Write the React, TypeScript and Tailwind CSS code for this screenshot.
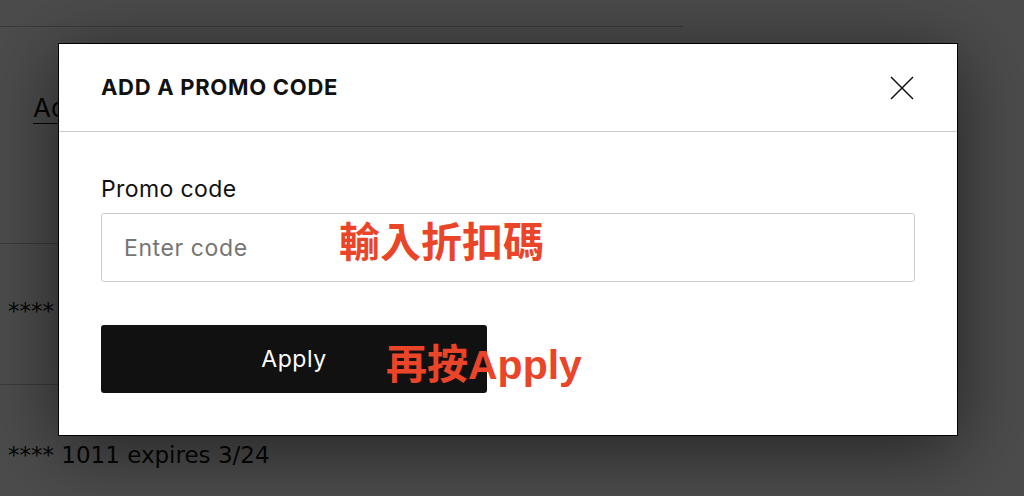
import React from "react";

const cards = ["**** 4242 expires 8/25", "**** 1011 expires 3/24"];

function CloseIcon() {
  return (
    <svg width="24" height="24" viewBox="0 0 24 24" fill="none">
      <path d="M1 1L23 23M23 1L1 23" stroke="#111" strokeWidth="1.5" />
    </svg>
  );
}

export default function App() {
  return (
    <div className="relative w-[1024px] h-[496px] overflow-hidden bg-white font-['Inter',sans-serif] text-[#111]">
      {/* page behind the dialog */}
      <div className="w-[683px]">
        <div className="h-[27px] border-b border-[#c4c4c4]" />
        <div className="h-[217px] border-b border-[#c4c4c4] pl-[33px] pt-[61px]">
          <span className="text-[26px] underline underline-offset-[6px] decoration-1">
            Add
          </span>
        </div>
        <div className="h-[141px] border-b border-[#c4c4c4] pl-[8px] pt-[50px] text-[23px] font-['DejaVu_Sans',sans-serif]">
          {cards[0]}
        </div>
        <div className="pl-[8px] pt-[53px] text-[23px] font-['DejaVu_Sans',sans-serif]">
          {cards[1]}
        </div>
      </div>

      <div className="absolute inset-0 bg-black/70" />

      <div className="absolute left-[58px] top-[43px] w-[900px] h-[393px] bg-white border border-black shadow-[0_12px_70px_rgba(0,0,0,0.55)]">
        <div className="flex items-center justify-between h-[88px] border-b border-[#ccc] pl-[42px] pr-[43px]">
          <h2 className="text-[22px] font-bold tracking-[0.7px]">ADD A PROMO CODE</h2>
          <button className="w-[24px] h-[24px]">
            <CloseIcon />
          </button>
        </div>

        <div className="px-[42px] pt-[44px]">
          <label className="block text-[23px] tracking-[0.4px] leading-[26px] mb-[11px]">Promo code</label>
          <div className="relative">
            <input
              placeholder="Enter code"
              className="w-full h-[69px] border border-[#ccc] rounded-[3px] pl-[22px] text-[23px] tracking-[0.6px] placeholder:text-[#757575] outline-none"
            />
            <span className="absolute left-[238px] top-[10px] text-[41px] leading-none font-bold text-[#ea4429] font-['Liberation_Sans','Noto_Sans_CJK_TC',sans-serif] pointer-events-none">
              輸入折扣碼
            </span>
          </div>
          <div className="relative mt-[43px]">
            <button className="w-[386px] h-[68px] bg-[#111] rounded-[3px] text-white text-[23px] tracking-[0.6px]">
              Apply
            </button>
            <span className="absolute left-[285px] top-[20px] text-[41px] leading-none font-bold text-[#ea4429] font-['Liberation_Sans','Noto_Sans_CJK_TC',sans-serif] pointer-events-none">
              再按Apply
            </span>
          </div>
        </div>
      </div>
    </div>
  );
}
